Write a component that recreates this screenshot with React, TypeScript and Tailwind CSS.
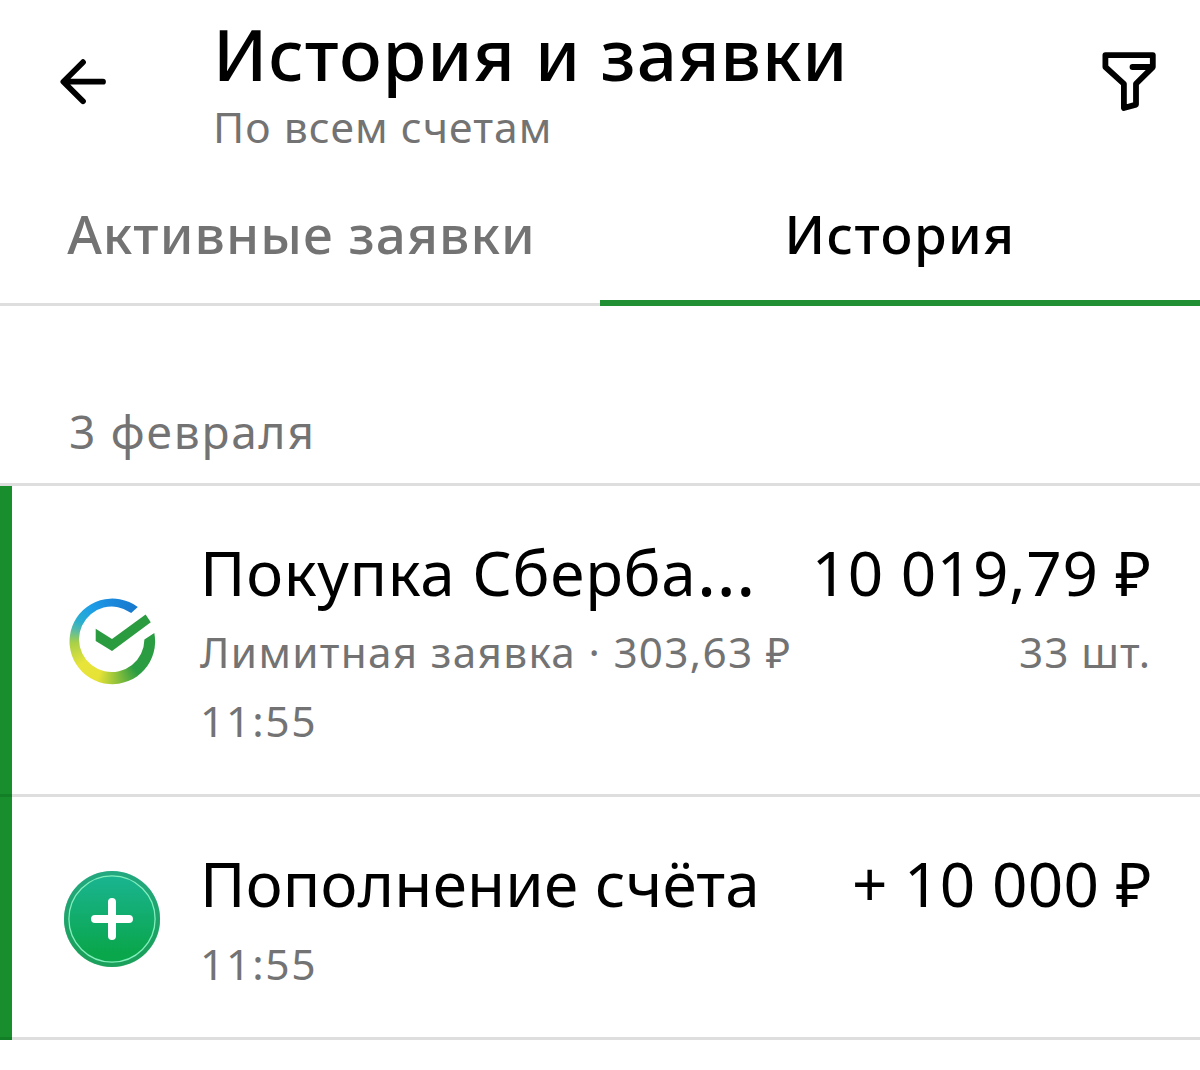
import type { ReactNode } from 'react';

interface Operation {
  id: string;
  icon: ReactNode;
  title: string;
  truncated?: boolean;
  titleClass: string;
  amount: string;
  amountClass: string;
  details?: string;
  quantity?: string;
  time: string;
}

function BackIcon() {
  return (
    <svg width="52" height="48" viewBox="0 0 52 48" fill="none" stroke="#000" strokeWidth="5.8" strokeLinecap="round" strokeLinejoin="round">
      <path d="M26 4.2 6.4 23.7 26 43.2M7 23.7h39" />
    </svg>
  );
}

function FilterIcon() {
  return (
    <svg width="58" height="64" viewBox="0 0 58 64" fill="none" stroke="#000" strokeWidth="5.8" strokeLinecap="round" strokeLinejoin="round">
      <path d="M5.4 5.1h47.4v12L36 33.8v20.8L23.9 58V33.8L5.4 17V5.1ZM32.5 17h20" />
    </svg>
  );
}

function SberIcon() {
  return (
    <svg width="96" height="96" viewBox="0 0 96 96" className="shrink-0">
      <clipPath id="ring">
        <path d="M73.8 15A42.8 42.8 0 1 0 90.3 41L80.4 47.6A32.7 32.7 0 1 1 67.2 21Z" />
      </clipPath>
      <foreignObject width="96" height="96" clipPath="url(#ring)">
        <div className="size-full bg-[conic-gradient(#1a88dc_0deg,#1878cc_38deg,#2a9c42_80deg,#2a9c42_142deg,#a0c83b_178deg,#e6e236_200deg,#e8e43a_232deg,#a8d048_266deg,#5cbca0_284deg,#2aaed0_300deg,#1e9fe6_325deg,#1a88dc_360deg)]" />
      </foreignObject>
      <path d="M31.7 36.7 48 47l33.6-24.6 5.2 7.8L48 59 31.7 49Z" fill="#2b9b40" />
    </svg>
  );
}

function DepositIcon() {
  return (
    <svg width="98" height="98" viewBox="0 0 98 98" className="mt-1 shrink-0">
      <defs>
        <linearGradient id="deposit" x1="0" y1="0" x2="0" y2="1">
          <stop offset="0" stopColor="#1bb595" />
          <stop offset="0.85" stopColor="#0aa64c" />
          <stop offset="1" stopColor="#0aa64c" />
        </linearGradient>
      </defs>
      <circle cx="48" cy="49" r="48" fill="url(#deposit)" />
      <circle cx="48" cy="49" r="45.8" fill="none" stroke="#2b9c6c" strokeOpacity="0.5" strokeWidth="4.6" />
      <circle cx="48" cy="49" r="43.1" fill="none" stroke="#82efbd" strokeWidth="1.3" />
      <path d="M48 32v34M31 49h34" stroke="#fff" strokeWidth="8" strokeLinecap="round" />
    </svg>
  );
}

const operations: Operation[] = [
  {
    id: 'buy',
    icon: <SberIcon />,
    title: 'Покупка Сберба',
    truncated: true,
    titleClass: 'tracking-[0.7px]',
    amount: '10 019,79 ₽',
    amountClass: 'tracking-[0.65px]',
    details: 'Лимитная заявка · 303,63 ₽',
    quantity: '33 шт.',
    time: '11:55',
  },
  {
    id: 'deposit',
    icon: <DepositIcon />,
    title: 'Пополнение счёта',
    titleClass: 'tracking-[0.25px]',
    amount: '+ 10 000 ₽',
    amountClass: 'tracking-[0.28px]',
    time: '11:55',
  },
];

function OperationRow({ operation }: { operation: Operation }) {
  return (
    <li className="flex border-b-[3px] border-[#dedede]">
      {/* Status stripe, runs over the divider */}
      <div className="-mb-[3px] w-3 shrink-0 border-b-[3px] border-[#127f26] bg-[#188f2c]" />
      <div className="flex w-[188px] shrink-0 items-center pl-[52px]">{operation.icon}</div>
      <div className="min-w-0 flex-1 pt-[50px] pr-12 pb-12">
        <div className="flex h-[72px] justify-between whitespace-nowrap text-[62px] leading-[72px]">
          <span className={operation.titleClass}>
            {operation.title}
            {operation.truncated && <span className="text-[75px] leading-[0] tracking-normal">…</span>}
          </span>
          <span className={operation.amountClass}>{operation.amount}</span>
        </div>
        {operation.details && (
          <div className="mt-[18px] -mb-[2px] flex justify-between whitespace-nowrap text-[42.3px] leading-[52px] text-[#737373]">
            <span className="tracking-[1.3px]">{operation.details}</span>
            <span className="pr-px tracking-[0.9px]">{operation.quantity}</span>
          </div>
        )}
        <div className="mt-[18px] text-[42.6px] leading-[52px] tracking-[1.7px] text-[#737373]">{operation.time}</div>
      </div>
    </li>
  );
}

export default function App() {
  return (
    <div className="min-h-[1070px] w-[1200px] overflow-hidden bg-white font-['Noto_Sans',sans-serif] text-black">
      <header className="flex h-[186px] items-start">
        <button className="mt-[58px] ml-[57px]">
          <BackIcon />
        </button>
        <div className="ml-[104px] flex-1 whitespace-nowrap pt-[18px]">
          <h1 className="text-[71px] leading-[72px] font-medium tracking-[0.9px]">История и заявки</h1>
          <p className="mt-[10px] text-[42.6px] leading-[52px] tracking-[1.05px] text-[#737373]">По всем счетам</p>
        </div>
        <button className="mt-[50px] mr-[42px]">
          <FilterIcon />
        </button>
      </header>

      <nav className="grid h-[120px] grid-cols-2 text-[53px] leading-[60px] font-medium">
        <button className="border-b-[3px] border-[#dedede] pb-[21px] pl-[3px] tracking-[1.05px] text-[#737373]">Активные заявки</button>
        <button className="border-b-[6px] border-[#218f33] pb-[18px] tracking-[1.4px]">История</button>
      </nav>

      <section>
        <h2 className="h-[180px] border-b-[3px] border-[#dedede] pt-[95px] pl-[69px] text-[46px] leading-[60px] tracking-[1.8px] text-[#737373]">
          3 февраля
        </h2>
        <ul>
          {operations.map((operation) => (
            <OperationRow key={operation.id} operation={operation} />
          ))}
        </ul>
      </section>
    </div>
  );
}
